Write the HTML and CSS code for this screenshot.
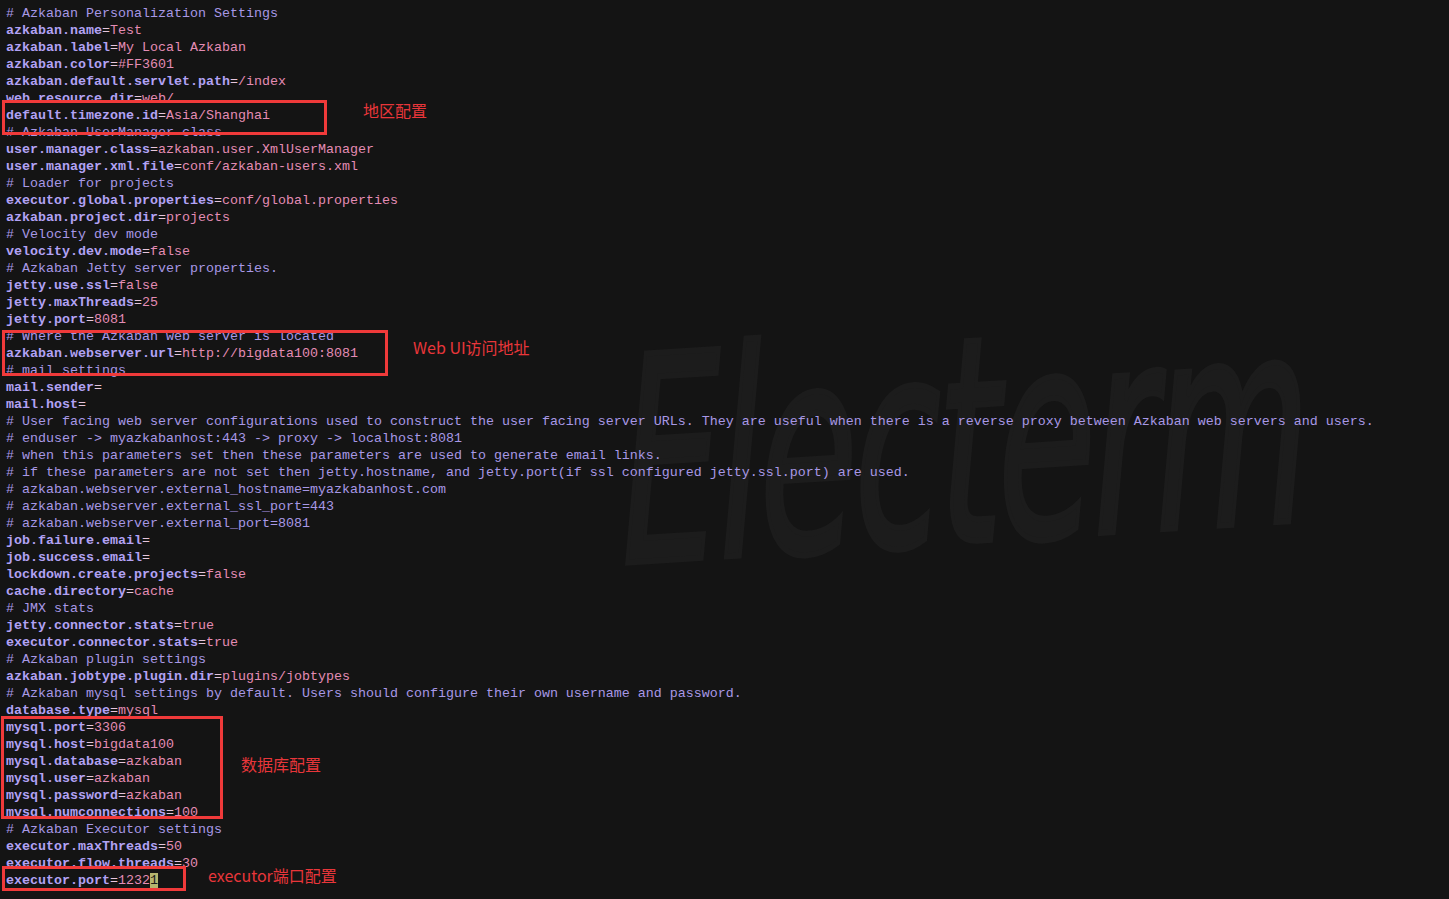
FILE: index.html
```html
<!DOCTYPE html>
<html>
<head>
<meta charset="utf-8">
<link rel="stylesheet" href="styles.css">
</head>
<body>
<div class="term">
  <div class="watermark">Electerm</div>
  <div class="lines">
    <div class="c"># Azkaban Personalization Settings</div>
    <div><span class="k">azkaban.name</span><span class="e">=</span><span class="v">Test</span></div>
    <div><span class="k">azkaban.label</span><span class="e">=</span><span class="v">My Local Azkaban</span></div>
    <div><span class="k">azkaban.color</span><span class="e">=</span><span class="v">#FF3601</span></div>
    <div><span class="k">azkaban.default.servlet.path</span><span class="e">=</span><span class="v">/index</span></div>
    <div><span class="k">web.resource.dir</span><span class="e">=</span><span class="v">web/</span></div>
    <div><span class="k">default.timezone.id</span><span class="e">=</span><span class="v">Asia/Shanghai</span></div>
    <div class="c"># Azkaban UserManager class</div>
    <div><span class="k">user.manager.class</span><span class="e">=</span><span class="v">azkaban.user.XmlUserManager</span></div>
    <div><span class="k">user.manager.xml.file</span><span class="e">=</span><span class="v">conf/azkaban-users.xml</span></div>
    <div class="c"># Loader for projects</div>
    <div><span class="k">executor.global.properties</span><span class="e">=</span><span class="v">conf/global.properties</span></div>
    <div><span class="k">azkaban.project.dir</span><span class="e">=</span><span class="v">projects</span></div>
    <div class="c"># Velocity dev mode</div>
    <div><span class="k">velocity.dev.mode</span><span class="e">=</span><span class="v">false</span></div>
    <div class="c"># Azkaban Jetty server properties.</div>
    <div><span class="k">jetty.use.ssl</span><span class="e">=</span><span class="v">false</span></div>
    <div><span class="k">jetty.maxThreads</span><span class="e">=</span><span class="v">25</span></div>
    <div><span class="k">jetty.port</span><span class="e">=</span><span class="v">8081</span></div>
    <div class="c"># Where the Azkaban web server is located</div>
    <div><span class="k">azkaban.webserver.url</span><span class="e">=</span><span class="v">http://bigdata100:8081</span></div>
    <div class="c"># mail settings</div>
    <div><span class="k">mail.sender</span><span class="e">=</span></div>
    <div><span class="k">mail.host</span><span class="e">=</span></div>
    <div class="c"># User facing web server configurations used to construct the user facing server URLs. They are useful when there is a reverse proxy between Azkaban web servers and users.</div>
    <div class="c"># enduser -&gt; myazkabanhost:443 -&gt; proxy -&gt; localhost:8081</div>
    <div class="c"># when this parameters set then these parameters are used to generate email links.</div>
    <div class="c"># if these parameters are not set then jetty.hostname, and jetty.port(if ssl configured jetty.ssl.port) are used.</div>
    <div class="c"># azkaban.webserver.external_hostname=myazkabanhost.com</div>
    <div class="c"># azkaban.webserver.external_ssl_port=443</div>
    <div class="c"># azkaban.webserver.external_port=8081</div>
    <div><span class="k">job.failure.email</span><span class="e">=</span></div>
    <div><span class="k">job.success.email</span><span class="e">=</span></div>
    <div><span class="k">lockdown.create.projects</span><span class="e">=</span><span class="v">false</span></div>
    <div><span class="k">cache.directory</span><span class="e">=</span><span class="v">cache</span></div>
    <div class="c"># JMX stats</div>
    <div><span class="k">jetty.connector.stats</span><span class="e">=</span><span class="v">true</span></div>
    <div><span class="k">executor.connector.stats</span><span class="e">=</span><span class="v">true</span></div>
    <div class="c"># Azkaban plugin settings</div>
    <div><span class="k">azkaban.jobtype.plugin.dir</span><span class="e">=</span><span class="v">plugins/jobtypes</span></div>
    <div class="c"># Azkaban mysql settings by default. Users should configure their own username and password.</div>
    <div><span class="k">database.type</span><span class="e">=</span><span class="v">mysql</span></div>
    <div><span class="k">mysql.port</span><span class="e">=</span><span class="v">3306</span></div>
    <div><span class="k">mysql.host</span><span class="e">=</span><span class="v">bigdata100</span></div>
    <div><span class="k">mysql.database</span><span class="e">=</span><span class="v">azkaban</span></div>
    <div><span class="k">mysql.user</span><span class="e">=</span><span class="v">azkaban</span></div>
    <div><span class="k">mysql.password</span><span class="e">=</span><span class="v">azkaban</span></div>
    <div><span class="k">mysql.numconnections</span><span class="e">=</span><span class="v">100</span></div>
    <div class="c"># Azkaban Executor settings</div>
    <div><span class="k">executor.maxThreads</span><span class="e">=</span><span class="v">50</span></div>
    <div><span class="k">executor.flow.threads</span><span class="e">=</span><span class="v">30</span></div>
    <div><span class="k">executor.port</span><span class="e">=</span><span class="v">1232</span><span class="cursor">1</span></div>
  </div>

  <div class="box box-tz"></div>
  <div class="note note-tz">地区配置</div>
  <div class="box box-web"></div>
  <div class="note note-web">Web UI访问地址</div>
  <div class="box box-db"></div>
  <div class="note note-db">数据库配置</div>
  <div class="box box-exec"></div>
  <div class="note note-exec">executor端口配置</div>
</div>
</body>
</html>
```
FILE: styles.css
```css
html, body {
  margin: 0;
  padding: 0;
  background: #141414;
}
.term {
  position: relative;
  width: 1449px;
  height: 899px;
  overflow: hidden;
  background: #141414;
}
.watermark {
  position: absolute;
  left: 618px;
  top: 322px;
  font-family: "DejaVu Sans", sans-serif;
  font-weight: normal;
  font-style: italic;
  font-size: 285px;
  letter-spacing: -6px;
  color: #1c1c1c;
  line-height: 1;
  transform: scaleX(0.56) rotate(-2deg);
  transform-origin: left top;
  white-space: nowrap;
  -webkit-text-stroke: 6px #1c1c1c;
}
.lines {
  position: relative;
  padding: 5px 0 0 6px;
  font-family: "Liberation Mono", "Courier New", monospace;
  font-size: 13.33px;
  line-height: 17px;
  color: #a99ae9;
}
.lines > div {
  white-space: pre;
  height: 17px;
}
.c {
  color: #a898e6;
}
.k {
  color: #b2a2f4;
  font-weight: bold;
}
.e {
  color: #e6c6dc;
}
.v {
  color: #e48cb4;
}
.cursor {
  background: #b5b56e;
  color: #1a1a1a;
}
.box {
  position: absolute;
  border: 3px solid #f03a3a;
  box-sizing: border-box;
}
.box-tz { left: 2px; top: 100px; width: 325px; height: 35px; }
.box-web { left: 2px; top: 330px; width: 386px; height: 46px; }
.box-db { left: 1px; top: 716px; width: 222px; height: 103px; }
.box-exec { left: 2px; top: 866px; width: 184px; height: 25px; }
.note {
  position: absolute;
  font-family: "Noto Sans CJK SC", "Noto Sans", sans-serif;
  font-size: 16px;
  line-height: 20px;
  color: #e8363a;
  white-space: nowrap;
}
.note-tz { left: 363px; top: 100px; }
.note-web { left: 413px; top: 337px; }
.note-db { left: 241px; top: 754px; }
.note-exec { left: 208px; top: 865px; }
```
